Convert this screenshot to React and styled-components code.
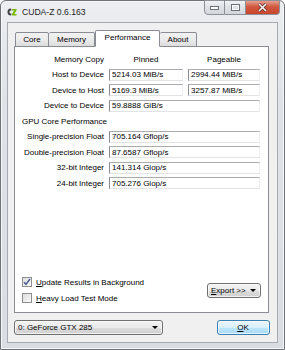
import React from 'react'
import styled, { createGlobalStyle } from 'styled-components'

const GlobalStyle = createGlobalStyle`
  html, body {
    margin: 0;
    padding: 0;
    background: #ffffff;
  }
  body {
    font-family: "Liberation Sans", Arial, sans-serif;
    font-size: 8px;
    color: #000;
  }
`

const Window = styled.div`
  width: 285px;
  height: 350px;
  box-sizing: border-box;
  border: 1px solid #6f7378;
  border-radius: 6px 6px 0 0;
  background: linear-gradient(#eceef1, #dfe2e6 30%, #dadde2);
  box-shadow: inset 0 0 0 1px #f6f7f8;
  display: flex;
  flex-direction: column;
`

const TitleBar = styled.div`
  height: 21px;
  display: flex;
  align-items: center;
  padding: 0 4px 0 6px;
`

const TitleText = styled.span`
  font-size: 8.6px;
  color: #1b1b1b;
  margin-left: 5px;
`

const Caption = styled.div`
  display: flex;
  align-self: flex-start;
  margin-left: auto;
  margin-top: -1px;
  height: 15px;
`

const CapButton = styled.div`
  width: ${p => p.$w}px;
  height: 15px;
  box-sizing: border-box;
  border: 1px solid #8c9097;
  border-left-width: ${p => (p.$first ? 1 : 0)}px;
  border-radius: ${p => p.$radius};
  background: ${p =>
    p.$close
      ? 'linear-gradient(#e6a08e, #d0583e 45%, #c8452c)'
      : 'linear-gradient(#f1f2f4, #dfe2e6 45%, #d3d6db)'};
  display: flex;
  align-items: center;
  justify-content: center;
`

const Client = styled.div`
  flex: 1;
  margin: 0 6px 6px;
  border: 1px solid #a6abb2;
  background: #f0f0f0;
  display: flex;
  flex-direction: column;
  padding: 7px 8px 7px 6px;
`

const TabWidget = styled.div`
  flex: 1;
  display: flex;
  flex-direction: column;
`

const TabBar = styled.div`
  height: 17px;
  display: flex;
  align-items: flex-end;
  padding-left: 1px;
  position: relative;
  z-index: 1;
`

const Tab = styled.div`
  width: ${p => p.$w}px;
  height: ${p => (p.$active ? 17 : 15)}px;
  box-sizing: border-box;
  border: 1px solid #898c95;
  border-left-width: ${p => (p.$first || p.$active ? 1 : 0)}px;
  border-bottom-color: ${p => (p.$active ? '#ffffff' : '#898c95')};
  border-radius: 2px 2px 0 0;
  background: ${p =>
    p.$active ? '#ffffff' : 'linear-gradient(#f2f2f2, #ebebeb 50%, #dddddd)'};
  display: flex;
  align-items: center;
  justify-content: center;
  padding-bottom: ${p => (p.$active ? 2 : 0)}px;
`

const Pane = styled.div`
  flex: 1;
  margin-top: -1px;
  border: 1px solid #898c95;
  background: #ffffff;
  display: flex;
  flex-direction: column;
  padding: 6px 7px 9px 7px;
`

const Grid = styled.div`
  display: grid;
  grid-template-columns: 82px 74px 72px;
  grid-auto-rows: 12px;
  column-gap: 5px;
  row-gap: 3.5px;
  align-items: center;
`

const Label = styled.div`
  text-align: ${p => p.$align || 'right'};
  grid-column: ${p => p.$span || 'auto'};
  white-space: nowrap;
`

const Field = styled.div`
  grid-column: ${p => p.$span || 'auto'};
  height: 12px;
  box-sizing: border-box;
  border-top: 1px solid #a9abb1;
  border-left: 1px solid #8a8c92;
  border-bottom: 1px solid #e2e3e6;
  border-right: 1px solid #eceef0;
  padding-left: 2px;
  display: flex;
  align-items: center;
  white-space: nowrap;
`

const Options = styled.div`
  margin-top: auto;
  display: flex;
  align-items: center;
  justify-content: space-between;
`

const CheckList = styled.div`
  display: flex;
  flex-direction: column;
  gap: 6px;
`

const CheckRow = styled.div`
  display: flex;
  align-items: center;
  gap: 4px;
  height: 10px;
`

const Box = styled.div`
  width: 10px;
  height: 10px;
  box-sizing: border-box;
  border: 1px solid #8e8f8f;
  background: linear-gradient(135deg, #dcdcdc, #fbfbfb);
  display: flex;
  align-items: center;
  justify-content: center;
`

const Button = styled.div`
  width: ${p => p.$w}px;
  height: ${p => p.$h || 15}px;
  box-sizing: border-box;
  border: 1px solid ${p => (p.$default ? '#3c7fb1' : '#707070')};
  border-radius: 3px;
  background: ${p =>
    p.$default
      ? 'linear-gradient(#eaf6fd, #d9f0fc 50%, #bee6fd 51%, #a7d9f5)'
      : 'linear-gradient(#f2f2f2, #ebebeb 50%, #dddddd 51%, #cfcfcf)'};
  box-shadow: inset 0 0 0 1px rgba(255, 255, 255, 0.7);
  display: flex;
  align-items: center;
  justify-content: ${p => p.$justify || 'center'};
  padding: 0 4px 0 3px;
  margin-right: ${p => p.$mr || 0}px;
`

const Arrow = styled.span`
  width: 0;
  height: 0;
  border-left: 3px solid transparent;
  border-right: 3px solid transparent;
  border-top: 3px solid #000;
`

const BottomRow = styled.div`
  margin-top: 7px;
  display: flex;
  align-items: center;
  justify-content: space-between;
`

const Key = styled.span`
  text-decoration: underline;
  text-underline-offset: 1px;
`

const AppIcon = () => (
  <svg width="10" height="8" viewBox="0 0 10 8">
    <path d="M4 0.5 C1.5 0.5 0.5 2 0.5 4 C0.5 6 1.5 7.5 4 7.5 L4.5 5.5 C3 5.5 2.5 5 2.5 4 C2.5 3 3 2.5 4.5 2.5 Z" fill="#3d3f3d" />
    <path d="M5 1 L9.5 1 L9.5 2.5 L7.2 6 L9.5 6 L9.5 7.5 L5 7.5 L5 6 L7.2 2.5 L5 2.5 Z" fill="#76b900" />
  </svg>
)

const CheckMark = () => (
  <svg width="8" height="8" viewBox="0 0 8 8">
    <path d="M1 4.2 L3 6.3 L7 1" fill="none" stroke="#4a5d92" strokeWidth="1.5" />
  </svg>
)

const memory = [
  ['Host to Device', '5214.03 MiB/s', '2994.44 MiB/s'],
  ['Device to Host', '5169.3 MiB/s', '3257.87 MiB/s'],
]

const core = [
  ['Single-precision Float', '705.164 Gflop/s'],
  ['Double-precision Float', '87.6587 Gflop/s'],
  ['32-bit Integer', '141.314 Giop/s'],
  ['24-bit Integer', '705.276 Giop/s'],
]

const tabs = [
  ['Core', 34],
  ['Memory', 46],
  ['Performance', 65],
  ['About', 37],
]

export default function App() {
  return (
    <>
      <GlobalStyle />
      <Window>
        <TitleBar>
          <AppIcon />
          <TitleText>CUDA-Z 0.6.163</TitleText>
          <Caption>
            <CapButton $w={21} $first $radius="0 0 0 4px">
              <svg width="9" height="4" viewBox="0 0 9 4">
                <rect x="0.5" y="0.5" width="8" height="3" fill="#fff" stroke="#6b7078" />
              </svg>
            </CapButton>
            <CapButton $w={21} $radius="0">
              <svg width="9" height="7" viewBox="0 0 9 7">
                <rect x="0.5" y="0.5" width="8" height="6" fill="none" stroke="#6b7078" />
                <rect x="1.5" y="1.5" width="6" height="4" fill="none" stroke="#fff" />
              </svg>
            </CapButton>
            <CapButton $w={34} $close $radius="0 0 4px 0">
              <svg width="11" height="9" viewBox="0 0 11 9">
                <path d="M2 1 L9 8 M9 1 L2 8" stroke="#5a2a22" strokeWidth="3" />
                <path d="M2 1 L9 8 M9 1 L2 8" stroke="#ffffff" strokeWidth="1.6" />
              </svg>
            </CapButton>
          </Caption>
        </TitleBar>
        <Client>
          <TabWidget>
            <TabBar>
              {tabs.map(([name, w], i) => (
                <Tab key={name} $w={w} $first={i === 0} $active={name === 'Performance'}>
                  {name}
                </Tab>
              ))}
            </TabBar>
            <Pane>
              <Grid>
                <Label>Memory Copy</Label>
                <Label $align="center">Pinned</Label>
                <Label $align="center">Pageable</Label>
                {memory.map(([name, a, b]) => (
                  <React.Fragment key={name}>
                    <Label>{name}</Label>
                    <Field>{a}</Field>
                    <Field>{b}</Field>
                  </React.Fragment>
                ))}
                <Label>Device to Device</Label>
                <Field $span="2 / 4">59.8888 GiB/s</Field>
                <Label $align="left" $span="1 / -1">GPU Core Performance</Label>
                {core.map(([name, v]) => (
                  <React.Fragment key={name}>
                    <Label>{name}</Label>
                    <Field $span="2 / 4">{v}</Field>
                  </React.Fragment>
                ))}
              </Grid>
              <Options>
                <CheckList>
                  <CheckRow>
                    <Box>
                      <CheckMark />
                    </Box>
                    <span>
                      <Key>U</Key>pdate Results in Background
                    </span>
                  </CheckRow>
                  <CheckRow>
                    <Box />
                    <span>
                      <Key>H</Key>eavy Load Test Mode
                    </span>
                  </CheckRow>
                </CheckList>
                <Button $w={54} $justify="space-between">
                  <span>
                    <Key>E</Key>xport &gt;&gt;
                  </span>
                  <Arrow />
                </Button>
              </Options>
            </Pane>
          </TabWidget>
          <BottomRow>
            <Button $w={149} $justify="space-between">
              <span>0: GeForce GTX 285</span>
              <Arrow />
            </Button>
            <Button $w={53} $default $mr={-1}>
              <span>
                <Key>O</Key>K
              </span>
            </Button>
          </BottomRow>
        </Client>
      </Window>
    </>
  )
}
